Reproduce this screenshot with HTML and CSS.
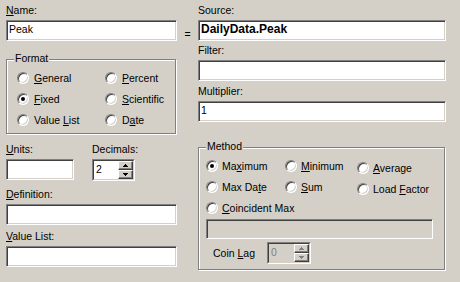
FILE: index.html
```html
<!DOCTYPE html>
<html lang="en">
<head>
    <meta charset="UTF-8">
    <title>Column Properties</title>
    <link rel="stylesheet" href="styles.css">
</head>
<body>
    <div class="dialog">
        <div class="col col-left">
            <div class="lbl"><u>N</u>ame:</div>
            <div class="edit">Peak</div>

            <div class="group format">
                <span class="group-title">Format</span>
                <div class="radios format-radios">
                    <div class="opt"><span class="radio"></span><span><u>G</u>eneral</span></div>
                    <div class="opt"><span class="radio"></span><span><u>P</u>ercent</span></div>
                    <div class="opt"><span class="radio on"></span><span><u>F</u>ixed</span></div>
                    <div class="opt"><span class="radio"></span><span><u>S</u>cientific</span></div>
                    <div class="opt"><span class="radio"></span><span>Value <u>L</u>ist</span></div>
                    <div class="opt"><span class="radio"></span><span>D<u>a</u>te</span></div>
                </div>
            </div>

            <div class="units-row">
                <div class="units">
                    <div class="lbl"><u>U</u>nits:</div>
                    <div class="edit units-edit"></div>
                </div>
                <div class="decimals">
                    <div class="lbl">Decimals:</div>
                    <div class="spin">
                        <div class="spin-inner">
                            <div class="spin-val">2</div>
                            <div class="spin-btns">
                                <div class="spin-btn"><svg width="5" height="3"><polygon points="2.5,0 5,3 0,3"/></svg></div>
                                <div class="spin-btn"><svg width="5" height="3"><polygon points="0,0 5,0 2.5,3"/></svg></div>
                            </div>
                        </div>
                    </div>
                </div>
            </div>

            <div class="lbl lbl-def"><u>D</u>efinition:</div>
            <div class="edit"></div>
            <div class="lbl lbl-vl"><u>V</u>alue List:</div>
            <div class="edit"></div>
        </div>

        <div class="eq">=</div>

        <div class="col col-right">
            <div class="lbl">Source:</div>
            <div class="edit edit-bold">DailyData.Peak</div>
            <div class="lbl lbl-filter">Filter:</div>
            <div class="edit"></div>
            <div class="lbl lbl-mult">Multiplier:</div>
            <div class="edit">1</div>

            <div class="group method">
                <span class="group-title">Method</span>
                <div class="radios method-radios">
                    <div class="opt"><span class="radio on"></span><span>Ma<u>x</u>imum</span></div>
                    <div class="opt"><span class="radio"></span><span><u>M</u>inimum</span></div>
                    <div class="opt low"><span class="radio"></span><span><u>A</u>verage</span></div>
                    <div class="opt"><span class="radio"></span><span>Max Da<u>t</u>e</span></div>
                    <div class="opt"><span class="radio"></span><span><u>S</u>um</span></div>
                    <div class="opt low"><span class="radio"></span><span>Load <u>F</u>actor</span></div>
                    <div class="opt wide"><span class="radio"></span><span><u>C</u>oincident Max</span></div>
                </div>
                <div class="edit disabled coin-edit"></div>
                <div class="coin-row">
                    <div class="coin-lbl">Coin <u>L</u>ag</div>
                    <div class="spin off">
                        <div class="spin-inner">
                            <div class="spin-val">0</div>
                            <div class="spin-btns">
                                <div class="spin-btn"><svg width="5" height="3"><polygon points="2.5,0 5,3 0,3"/></svg></div>
                                <div class="spin-btn"><svg width="5" height="3"><polygon points="0,0 5,0 2.5,3"/></svg></div>
                            </div>
                        </div>
                    </div>
                </div>
            </div>
        </div>
    </div>
</body>
</html>
```

FILE: styles.css
```css
body {
    margin: 0;
    background-color: #d4d0c8;
    font-family: 'Liberation Sans', Arial, sans-serif;
    font-size: 10.5px;
    color: #000;
}

.dialog {
    display: flex;
    padding: 4px 0 0 6px;
    height: 278px;
}

.col-left {
    width: 171px;
}

.col-right {
    width: 248px;
}

.eq {
    width: 21px;
    padding-top: 20px;
    line-height: 21px;
    text-align: center;
}

.lbl {
    line-height: 13px;
    height: 13px;
    white-space: nowrap;
}

.lbl-filter {
    margin-top: 3px;
}

.lbl-mult {
    margin-top: 4px;
}

.lbl-def {
    margin-top: 7px;
}

.lbl-vl {
    margin-top: 5px;
}

/* sunken edit box */
.edit {
    box-sizing: border-box;
    height: 21px;
    margin-top: 3px;
    padding: 0 2px;
    line-height: 17px;
    background-color: #fff;
    border: 1px solid;
    border-color: #808080 #fff #fff #808080;
    box-shadow: inset 1px 1px 0 #404040, inset -1px -1px 0 #d4d0c8;
    white-space: nowrap;
    overflow: hidden;
}

.edit-bold {
    font-weight: bold;
    font-size: 12px;
}

.edit.disabled {
    background-color: #d4d0c8;
}

/* etched group box */
.group {
    position: relative;
    box-sizing: border-box;
    border: 1px solid #808080;
    box-shadow: inset 1px 1px 0 #fff, 1px 1px 0 #fff;
}

.group-title {
    position: absolute;
    top: -8px;
    left: 7px;
    padding: 0 1px;
    line-height: 13px;
    background-color: #d4d0c8;
}

.format {
    width: 170px;
    height: 75px;
    margin-top: 18px;
    padding: 7px 0 0 10px;
}

.method {
    width: 247px;
    height: 123px;
    margin-top: 25px;
    padding: 7px 0 0 7px;
}

.radios {
    display: grid;
    grid-auto-rows: 21px;
}

.format-radios {
    grid-template-columns: 88px auto;
}

.method-radios {
    grid-template-columns: 79px 72px auto;
}

.opt {
    display: flex;
    align-items: center;
    white-space: nowrap;
}

.opt.low {
    margin-top: 4px;
}

.opt.wide {
    grid-column: 1 / 4;
}

.radio {
    position: relative;
    box-sizing: border-box;
    width: 12px;
    height: 12px;
    margin-right: 4px;
    flex-shrink: 0;
    border-radius: 50%;
    background-color: #fff;
    border: 1px solid;
    border-color: #808080 #fff #fff #808080;
    box-shadow: inset 1px 1px 0 #404040, inset -1px -1px 0 #d4d0c8;
}

.format .radio {
    margin-right: 5px;
}

.radio.on::after {
    content: "";
    position: absolute;
    left: 3px;
    top: 3px;
    width: 4px;
    height: 4px;
    border-radius: 50%;
    background-color: #000;
}

.units-row {
    display: flex;
    margin-top: 9px;
}

.units {
    width: 86px;
}

.units-edit {
    width: 68px;
}

/* spin control */
.spin {
    box-sizing: border-box;
    width: 43px;
    height: 22px;
    margin-top: 3px;
    border: 1px solid;
    border-color: #808080 #fff #fff #808080;
}

.spin-inner {
    display: flex;
    height: 100%;
    box-sizing: border-box;
    border: 1px solid;
    border-color: #404040 #d4d0c8 #d4d0c8 #404040;
    background-color: #fff;
}

.spin-val {
    flex: 1;
    padding-left: 2px;
    line-height: 16px;
}

.spin-btns {
    width: 15px;
    display: flex;
    flex-direction: column;
}

.spin-btn {
    flex: 1;
    display: flex;
    align-items: center;
    justify-content: center;
    box-sizing: border-box;
    background-color: #d4d0c8;
    border: 1px solid;
    border-color: #fff #404040 #404040 #fff;
    box-shadow: inset -1px -1px 0 #808080;
}

.spin-btn svg {
    display: block;
    fill: #000;
    shape-rendering: crispEdges;
}

.spin.off .spin-inner {
    background-color: #d4d0c8;
}

.spin.off .spin-val {
    color: #808080;
}

.spin.off .spin-btn svg {
    fill: #808080;
}

.coin-edit {
    width: 227px;
    height: 20px;
    margin-top: 1px;
}

.coin-row {
    display: flex;
    align-items: center;
    height: 22px;
    margin-top: 3px;
    padding-left: 7px;
}

.coin-lbl {
    width: 54px;
    white-space: nowrap;
}

.coin-row .spin {
    width: 44px;
    margin-top: 0;
}
```
